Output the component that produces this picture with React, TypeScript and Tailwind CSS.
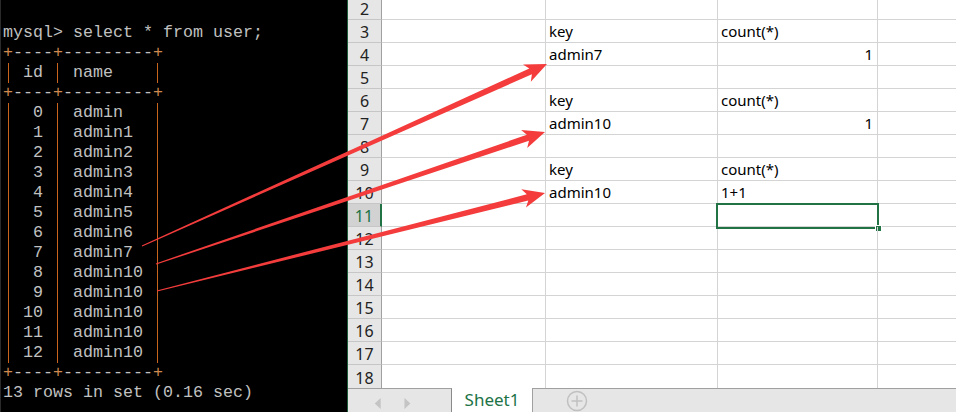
import React from "react";

const rows: [string, string][] = [
  ["0", "admin"],
  ["1", "admin1"],
  ["2", "admin2"],
  ["3", "admin3"],
  ["4", "admin4"],
  ["5", "admin5"],
  ["6", "admin6"],
  ["7", "admin7"],
  ["8", "admin10"],
  ["9", "admin10"],
  ["10", "admin10"],
  ["11", "admin10"],
  ["12", "admin10"],
];

function TermLine({ text }: { text: string }) {
  const parts: React.ReactNode[] = [];
  let buf = "";
  const flush = (k: number) => {
    if (buf) {
      parts.push(<span key={"t" + k}>{buf}</span>);
      buf = "";
    }
  };
  for (let i = 0; i < text.length; i++) {
    const c = text[i];
    if (c === "|") {
      flush(i);
      parts.push(
        <span key={"b" + i} className="inline-flex justify-center w-[10px] h-[20px] align-top">
          <span className="w-px h-full bg-[#c8641e]" />
        </span>
      );
    } else if (c === "+") {
      flush(i);
      parts.push(
        <span key={"p" + i} className="text-[#d08a50]">
          +
        </span>
      );
    } else {
      buf += c;
    }
  }
  flush(text.length);
  return <div className="h-[20px] leading-[20px] whitespace-pre">{parts}</div>;
}

function Terminal() {
  const sep = "+----+---------+";
  const lines = [
    "mysql> select * from user;",
    sep,
    "| id | name    |",
    sep,
    ...rows.map(([id, n]) => "| " + id.padStart(2, " ") + " | " + n.padEnd(7, " ") + " |"),
    sep,
    "13 rows in set (0.16 sec)",
  ];
  return (
    <div
      className="w-[347px] h-full bg-black text-[#c0c0c0] pt-[23px] pl-[2px] text-[16.67px] border-l border-[#2a2a2a]"
      style={{ fontFamily: '"Liberation Mono", monospace' }}
    >
      {lines.map((l, i) => (
        <TermLine key={i} text={l} />
      ))}
    </div>
  );
}

type CellData = { c?: string; d?: string; dRight?: boolean };
const cellData: Record<number, CellData> = {
  3: { c: "key", d: "count(*)" },
  4: { c: "admin7", d: "1", dRight: true },
  6: { c: "key", d: "count(*)" },
  7: { c: "admin10", d: "1", dRight: true },
  9: { c: "key", d: "count(*)" },
  10: { c: "admin10", d: "1+1" },
};

function Sheet() {
  const nums = Array.from({ length: 17 }, (_, i) => i + 2);
  return (
    <div
      className="flex-1 h-full flex flex-col border-l border-[#1e5c3a] bg-white"
      style={{ fontFamily: '"Noto Sans", "Noto Sans CJK SC", sans-serif' }}
    >
      <div className="flex-1 overflow-hidden">
        <div className="mt-[-3px]">
          {nums.map((n) => {
            const sel = n === 11;
            const d = cellData[n] || {};
            const last = n === 18;
            return (
              <div key={n} className="flex h-[23px]">
                <div
                  className={
                    "w-[34px] flex items-center justify-center pt-[3px] text-[16px] leading-[19px] " +
                    (last ? "" : "border-b border-b-[#c6c6c6] ") +
                    (sel
                      ? "bg-[#d2d2d2] text-[#217346] border-r-2 border-r-[#217346]"
                      : "bg-[#e6e6e6] text-[#222] border-r border-r-[#a0a0a0]")
                  }
                >
                  {n}
                </div>
                <div className={"w-[164px] border-r border-[#d4d4d4] " + (last ? "" : "border-b")} />
                <div
                  className={
                    "w-[172px] border-r border-[#d4d4d4] pl-[3px] text-[15px] leading-[23px] text-black " +
                    (last ? "" : "border-b")
                  }
                >
                  {d.c}
                </div>
                <div
                  className={
                    "relative w-[160px] border-r border-[#d4d4d4] text-[15px] leading-[23px] text-black " +
                    (d.dRight ? "text-right pr-[4px] " : "pl-[3px] ") +
                    (last ? "" : "border-b")
                  }
                >
                  {d.d}
                  {sel && (
                    <>
                      <div className="absolute left-[-2px] top-[-1px] w-[163px] h-[26px] border-2 border-[#217346]" />
                      <div className="absolute left-[157px] top-[21px] w-[5px] h-[5px] bg-[#217346] border border-white box-content" />
                    </>
                  )}
                </div>
                <div className={"flex-1 border-[#d4d4d4] " + (last ? "" : "border-b")} />
              </div>
            );
          })}
        </div>
      </div>
      <div className="h-[24px] flex shrink-0">
        <div className="w-[104px] h-full bg-[#e6e6e6] border-t border-t-[#a0a0a0] border-r border-r-[#8a8a8a] flex items-center">
          <svg width="104" height="23" viewBox="0 0 104 23">
            <polygon points="33,9 27,14.5 33,20" fill="#c4c4c4" />
            <polygon points="57,9 63,14.5 57,20" fill="#c4c4c4" />
          </svg>
        </div>
        <div className="w-[80px] h-full bg-white flex items-center justify-center text-[17px] leading-[22px] text-[#217346] pb-[1px]">
          Sheet1
        </div>
        <div className="flex-1 h-full bg-[#e6e6e6] border-t border-t-[#a0a0a0] border-l border-l-[#a0a0a0] flex items-center pl-[33px]">
          <svg width="22" height="22" viewBox="0 0 22 22">
            <circle cx="11" cy="11" r="9.5" fill="none" stroke="#c0c0c0" strokeWidth="1.5" />
            <line x1="11" y1="5.5" x2="11" y2="16.5" stroke="#c0c0c0" strokeWidth="1.5" />
            <line x1="5.5" y1="11" x2="16.5" y2="11" stroke="#c0c0c0" strokeWidth="1.5" />
          </svg>
        </div>
      </div>
    </div>
  );
}

function arrowPoints(sx: number, sy: number, tx: number, ty: number) {
  const dx = tx - sx;
  const dy = ty - sy;
  const len = Math.hypot(dx, dy);
  const ux = dx / len;
  const uy = dy / len;
  const nx = -uy;
  const ny = ux;
  const headLen = 22;
  const headW = 9.5;
  const shaftEnd = 3.2;
  const shaftStart = 0.6;
  const bx = tx - ux * headLen;
  const by = ty - uy * headLen;
  const nbx = tx - ux * (headLen - 4);
  const nby = ty - uy * (headLen - 4);
  const pts = [
    [sx + nx * shaftStart, sy + ny * shaftStart],
    [nbx + nx * shaftEnd, nby + ny * shaftEnd],
    [bx + nx * headW, by + ny * headW],
    [tx, ty],
    [bx - nx * headW, by - ny * headW],
    [nbx - nx * shaftEnd, nby - ny * shaftEnd],
    [sx - nx * shaftStart, sy - ny * shaftStart],
  ];
  return pts.map((p) => p[0].toFixed(1) + "," + p[1].toFixed(1)).join(" ");
}

export default function App() {
  const arrows: [number, number, number, number][] = [
    [142, 246, 547, 64],
    [156, 264, 545, 132],
    [157, 291, 545, 193],
  ];
  return (
    <div className="relative w-[956px] h-[412px] overflow-hidden flex bg-black">
      <Terminal />
      <Sheet />
      <svg className="absolute inset-0 pointer-events-none" width="956" height="412" viewBox="0 0 956 412">
        {arrows.map((a, i) => (
          <polygon key={i} points={arrowPoints(a[0], a[1], a[2], a[3])} fill="#f43c3c" />
        ))}
      </svg>
    </div>
  );
}
